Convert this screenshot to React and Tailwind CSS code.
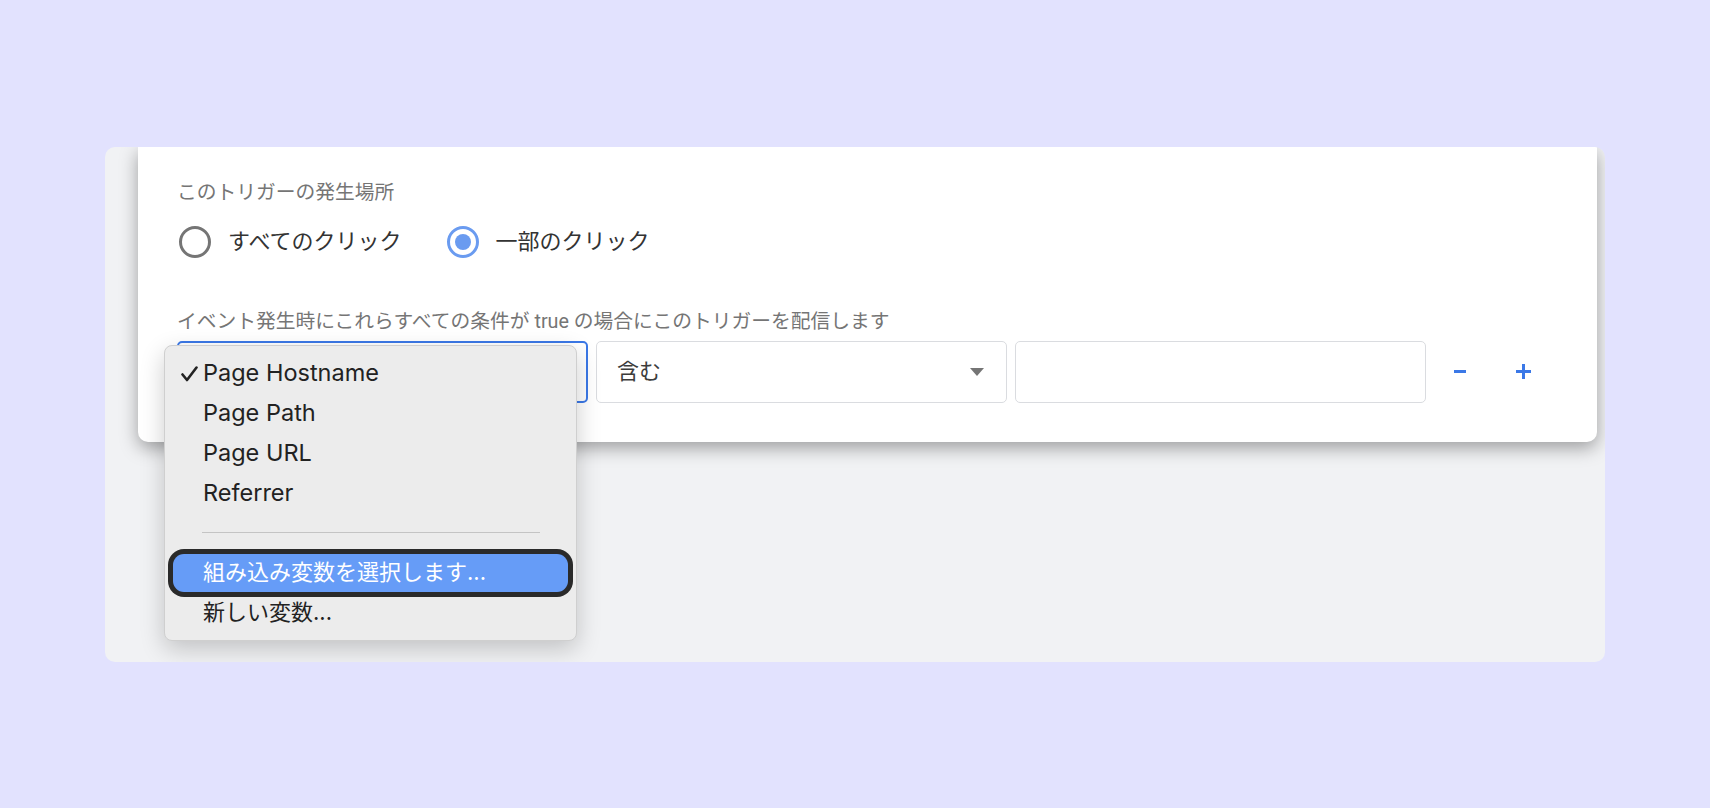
import React from 'react'

const menuItems = ['Page Hostname', 'Page Path', 'Page URL', 'Referrer']

function CheckIcon() {
  return (
    <svg className="absolute left-[16px] top-[13px] h-[16px] w-[17px]" viewBox="0 0 17 16" fill="none">
      <path d="M1.5 8.5 L6 14 L15.5 1.5" stroke="#222" strokeWidth="2.6" strokeLinecap="round" strokeLinejoin="round" />
    </svg>
  )
}

function Radio({ checked, label }) {
  return (
    <label className="flex items-center gap-[17px]">
      <span
        className={`flex h-[32px] w-[32px] items-center justify-center rounded-full border-[3px] ${
          checked ? 'border-[#6a9bf0]' : 'border-[#757575]'
        }`}
      >
        {checked && <span className="h-[16px] w-[16px] rounded-full bg-[#6a9bf0]" />}
      </span>
      <span className="text-[22px] leading-[32px] text-[#333]">{label}</span>
    </label>
  )
}

function VariableMenu() {
  return (
    <div className="absolute left-[-15px] top-[2px] z-10 w-[413px] rounded-[8px] border border-[#cfcfcf] bg-[#ececec] py-[7px] font-[family-name:Inter,'Noto_Sans_CJK_JP',sans-serif] text-[#222] shadow-[0_8px_24px_rgba(0,0,0,0.2)]">
      {menuItems.map((item, i) => (
        <div key={item} className="relative flex h-[40px] items-center pl-[38px] text-[23.5px]">
          {i === 0 && <CheckIcon />}
          {item}
        </div>
      ))}
      <div className="flex h-[40px] items-center pl-[37px] pr-[36px]">
        <div className="h-px w-full bg-[#c4c4c4]" />
      </div>
      <div className="h-[40px] px-[8px] py-[1px]">
        <div className="flex h-full items-center rounded-[11px] bg-[#669cf7] pl-[30px] text-[22px] text-white ring-[5px] ring-[#2a2a2a]">
          組み込み変数を選択します...
        </div>
      </div>
      <div className="flex h-[40px] items-center pl-[38px] text-[22px]">新しい変数...</div>
    </div>
  )
}

export default function App() {
  return (
    <div className="flex min-h-screen items-center justify-center bg-[#e2e2fe] font-[family-name:Roboto,'Noto_Sans_CJK_JP',sans-serif]">
      <div className="h-[515px] w-[1500px] overflow-hidden rounded-[10px] bg-[#f1f2f4]">
        <div className="ml-[33px] mr-[8px] rounded-b-[10px] bg-white pb-[39px] pl-[39px] pt-[34px] shadow-[0_6px_18px_rgba(0,0,0,0.35)]">
          <p className="text-[19.75px] leading-[24px] text-[#757575]">このトリガーの発生場所</p>

          <div className="ml-[2px] mt-[21px] flex items-center gap-[45px]">
            <Radio label="すべてのクリック" />
            <Radio checked label="一部のクリック" />
          </div>

          <p className="mt-[52px] text-[19.75px] leading-[24px] text-[#757575]">
            イベント発生時にこれらすべての条件が true の場合にこのトリガーを配信します
          </p>

          <div className="mt-[7px] flex items-center gap-[8px]">
            {/* variable picker, open */}
            <div className="relative h-[62px] w-[411px] rounded-[5px] border-2 border-[#3b78e7]">
              <VariableMenu />
            </div>

            {/* operator */}
            <div className="flex h-[62px] w-[411px] items-center justify-between rounded-[5px] border border-[#dadce0] pl-[20px] pr-[22px]">
              <span className="text-[22px] text-[#3c3c3c]">含む</span>
              <svg className="h-[8px] w-[14px]" viewBox="0 0 14 8">
                <polygon points="0,0 14,0 7,8" fill="#757575" />
              </svg>
            </div>

            {/* value */}
            <div className="h-[62px] w-[411px] rounded-[5px] border border-[#dadce0]" />

            <button className="ml-[20px] flex h-[20px] w-[12px] items-center">
              <svg className="h-[3px] w-[12px]" viewBox="0 0 12 3">
                <rect width="12" height="3" fill="#3b78e7" />
              </svg>
            </button>
            <button className="ml-[42px] flex h-[20px] w-[15px] items-center">
              <svg className="h-[15px] w-[15px]" viewBox="0 0 15 15">
                <rect x="6" width="3" height="15" fill="#3b78e7" />
                <rect y="6" width="15" height="3" fill="#3b78e7" />
              </svg>
            </button>
          </div>
        </div>
      </div>
    </div>
  )
}
